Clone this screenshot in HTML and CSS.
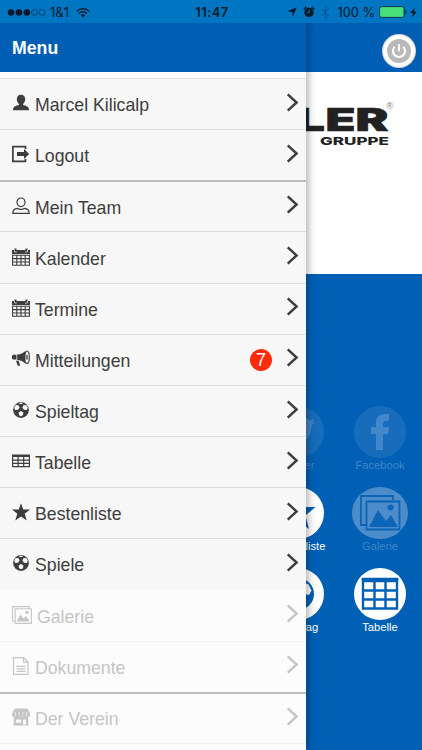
FILE: index.html
```html
<!DOCTYPE html>
<html lang="de">
<head>
<meta charset="utf-8">
<title>Menu</title>
<link rel="stylesheet" href="styles.css">
</head>
<body>
<svg class="defs" aria-hidden="true">
  <symbol id="arrow" viewBox="0 0 12 18"><path d="M1.500 1.200 9.900 9 1.500 16.800" fill="none" stroke="currentColor" stroke-width="2.300"/></symbol>
  <symbol id="user" viewBox="0 0 18 18"><path d="M9 .8c2.700 0 4.200 1.900 4.200 4.500 0 2.100-1 3.600-2.100 4.700v1c3 .7 6 1.300 6 5.300H.9c0-4 3-4.600 6-5.300v-1C5.800 8.900 4.800 7.400 4.800 5.300 4.800 2.700 6.300.8 9 .8z" fill="currentColor"/></symbol>
  <symbol id="logout" viewBox="0 0 18 18"><path d="M13.500 4V1.700H.9v14.600h12.600V14" fill="none" stroke="currentColor" stroke-width="1.700"/><path d="M5 7h7V4l5.200 5-5.200 5v-3H5z" fill="currentColor"/></symbol>
  <symbol id="person" viewBox="0 0 18 18"><g fill="none" stroke="currentColor" stroke-width="1.200"><ellipse cx="9" cy="5.300" rx="4" ry="4.300"/><path d="M5.500 11.400C2.500 11.600.8 13 .8 16.400h16.400c0-3.400-1.700-4.800-4.700-5-1.800 1.200-5.200 1.200-7 0z"/></g></symbol>
  <symbol id="calendar" viewBox="0 0 18 18"><path d="M0 2h2.500V.4h2V2h9V.4h2V2H18v4H0z" fill="currentColor"/><path d="M2.500 2v2h2.300M13 4h2.500V2" fill="none" stroke="#f7f7f7" stroke-width=".7"/><path d="M.6 6.500v10.800h16.800V6.500M.6 7.200h16.800M.6 10.600h16.800M.6 14h16.800M4.800 7v10.300M9 7v10.300M13.200 7v10.300" fill="none" stroke="currentColor" stroke-width="1.100"/></symbol>
  <symbol id="horn" viewBox="0 0 18 18"><path d="M0 5.800 1 4.800h3.500v4.800H1L0 8.700zM5.200 4.600C8.500 4.500 11 3 13.200 1v12.500c-2.200-2-4.700-3.200-8-3.400zM4 10.700h2.700l1.500 5H5.700z" fill="currentColor"/><ellipse cx="15" cy="7.200" rx="2.300" ry="6.200" fill="none" stroke="currentColor" stroke-width="1.200"/><path d="M15 5v4.500" stroke="currentColor" stroke-width="1.300"/></symbol>
  <symbol id="ball" viewBox="0 0 18 18"><circle cx="9" cy="9" r="7.900" fill="currentColor"/><g fill="#f7f7f7"><path d="M2.200 6.600 3.800 4l2.800.2 1 2.300-1.500 2.300-3 .1zM15.800 6.600 14.200 4l-2.800.2-1 2.300 1.500 2.300 3 .1zM6.600 11.500 9 10l2.400 1.500-.4 2.700-2 1-2-1zM6.600 2.300 9 1.600l2.400.7L9 3.200z"/></g></symbol>
  <symbol id="table" viewBox="0 0 18 18"><path d="M.6 3.300h16.800v11.400H.6zM.6 8.100h16.800M.6 11.300h16.800M6.100 4v10.500M11.700 4v10.500" fill="none" stroke="currentColor" stroke-width="1.200"/><path d="M0 2.700h18V5H0z" fill="currentColor"/></symbol>
  <symbol id="star" viewBox="0 0 18 18"><path d="m9 .2 2.300 6.300H18l-5.300 4.200 2 6.800L9 13.500l-5.700 4 2-6.800L0 6.500h6.700z" fill="currentColor"/></symbol>
  <symbol id="gallery" viewBox="0 0 20 18"><path d="M2.700 15.300H.6V.6h16.600v1.600M3.200 2.700h16.200v14.700H3.200z" fill="none" stroke="currentColor" stroke-width="1.100"/><path d="m4.500 15.500 4-7 3.200 4 2.300-2.500 4 5.500z" fill="currentColor"/><circle cx="15" cy="6.400" r="1.700" fill="currentColor"/></symbol>
  <symbol id="document" viewBox="0 0 18 18"><path d="M1.500.6h10l4.500 4.500v12.300H1.500zM11.500.6v4.500H16M4.500 9.300h8.800M4.500 11.800h8.800M4.500 14.300h8.800" fill="none" stroke="currentColor" stroke-width="1.150"/></symbol>
  <symbol id="shop" viewBox="0 0 18 18"><path d="M2.500.5h13L18 6v1.200a1.800 1.800 0 0 1-3.600 0 1.800 1.800 0 0 1-3.600 0 1.800 1.800 0 0 1-3.600 0 1.800 1.800 0 0 1-3.600 0A1.800 1.800 0 0 1 0 7.200V6zM1.800 8.500h14.400v8h.8v1H1v-1h.8z" fill="currentColor"/><path d="M4 11.500h5v3.200H4zM11 11.500h3v5h-3z" fill="#fcfcfc"/><path d="M3.600 7V4M7.200 7V4M10.800 7V4M14.400 7V4" stroke="#fcfcfc" stroke-width=".7"/></symbol>
</svg>

<div class="phone">
  <header class="statusbar">
    <div class="carrier">
      <svg class="signal" viewBox="0 0 39 9"><g fill="#041a2b"><circle cx="4" cy="4.500" r="3.300"/><circle cx="11.900" cy="4.500" r="3.300"/><circle cx="19.800" cy="4.500" r="3.300"/></g><g fill="none" stroke="#07365b" stroke-width=".8"><circle cx="27.500" cy="4.500" r="2.900"/><circle cx="35.100" cy="4.500" r="2.900"/></g></svg>
      <span>1&amp;1</span>
      <svg class="wifi" viewBox="0 0 14 11"><path d="M.8 4.200a8.800 8.800 0 0 1 12.400 0M3 6.500a5.700 5.700 0 0 1 8 0" fill="none" stroke="#041a2b" stroke-width="1.500"/><path d="m7 10.500-2.200-2.300a3.200 3.200 0 0 1 4.400 0z" fill="#041a2b"/></svg>
    </div>
    <div class="clock">11:47</div>
    <div class="indicators">
      <svg class="location" viewBox="0 0 10 10"><path d="M9.700.3 5.800 9.700 5.200 5 .4 4.300z" fill="#041a2b"/></svg>
      <svg class="alarm" viewBox="0 0 12 12"><circle cx="6" cy="6.400" r="4.700" fill="#041a2b"/><path d="M.8 3.300 3.300.9M11.200 3.300 8.700.9" stroke="#041a2b" stroke-width="1.500"/><path d="M6.200 3.500v3.200H4" fill="none" stroke="#0873bd"/></svg>
      <svg class="bluetooth" viewBox="0 0 9 15"><path d="m.8 4 7 7-3.400 3.300V.8l3.400 3.300-7 7" fill="none" stroke="#075795" stroke-width="1"/></svg>
      <span>100 %</span>
      <svg class="battery" viewBox="0 0 28 12"><rect x=".6" y=".6" width="24.400" height="10.800" rx="2" fill="#47df78" stroke="#08365a" stroke-width="1"/><path d="M26 4c2 .5 2 3.500 0 4z" fill="#08365a"/></svg>
      <svg class="bolt" viewBox="0 0 7 11"><path d="M4.700.5.4 6h2.500l-.8 4.500L6.700 4.700H4z" fill="#041a2b"/></svg>
    </div>
  </header>

  <main class="home">
    <div class="topbar">
      <button class="power" aria-label="Abmelden"><svg viewBox="0 0 34 34"><circle cx="17" cy="17" r="12" fill="#b9b9b9"/><path d="M12.700 12.800a6 6 0 1 0 8.600 0M17 10v7.300" fill="none" stroke="#fff" stroke-width="2.200"/></svg></button>
    </div>
    <div class="sponsor">
      <svg class="logo" viewBox="0 0 100 46" width="100" height="46">
        <g class="logo-name"><text x="-4" y="30.500" textLength="29" lengthAdjust="spacingAndGlyphs">L</text><text x="25.500" y="30.500" textLength="30" lengthAdjust="spacingAndGlyphs">E</text><text x="55.500" y="30.500" textLength="33" lengthAdjust="spacingAndGlyphs">R</text></g>
        <text class="logo-group" x="20" y="45" textLength="69" lengthAdjust="spacingAndGlyphs">GRUPPE</text>
        <text class="logo-mark" x="86.500" y="8.500">®</text>
      </svg>
    </div>
    <div class="tiles">
      <div class="tile dim"><svg class="disc" viewBox="0 0 52 52"><circle class="back" cx="26" cy="26" r="26"/><path class="front" d="M43 15.500c-1.300.6-2.600 1-4 1.100 1.400-.9 2.500-2.200 3-3.800-1.300.8-2.800 1.400-4.400 1.700a7 7 0 0 0-12 6.400c-5.800-.3-11-3.100-14.400-7.300-1.900 3.200-1 7.300 2.100 9.300-1.100 0-2.200-.3-3.100-.9 0 3.400 2.300 6.200 5.600 6.900-1 .3-2.100.3-3.200.1.900 2.800 3.500 4.800 6.500 4.900A14 14 0 0 1 9 36.800c11.500 7 30.500 1.500 30.500-17.600 1.400-1 2.600-2.200 3.500-3.700z"/></svg><span>Twitter</span></div>
      <div class="tile dim"><svg class="disc" viewBox="0 0 52 52"><circle class="back" cx="26" cy="26" r="26"/><path class="front" d="M22 44V28h-5v-7h5v-4c0-6 3.500-9 8.500-9H35v7h-3c-2.300 0-3 1-3 3v3h6l-1 7h-5v16z"/></svg><span>Facebook</span></div>
      <div class="tile"><svg class="disc" viewBox="0 0 52 52"><circle cx="26" cy="26" r="26" fill="#fff"/><path d="m26 6 4.500 14H43.500L33.500 28.500 37 42 26 33.500 15 42l3.500-13.500L8.500 20H21.500z" fill="#0060b6"/></svg><span>Bestenliste</span></div>
      <div class="tile faded"><svg class="disc wide" viewBox="0 0 56 52"><ellipse cx="28" cy="26" rx="28" ry="26"/><path d="M14 38H9V9h32v4M14.500 14.500h33v28h-33z"/><path class="solid" d="m17 40 9-17 8 11 5-6 7 12z"/><circle class="solid" cx="38.500" cy="20.500" r="3"/></svg><span>Galerie</span></div>
      <div class="tile"><svg class="disc" viewBox="0 0 52 52"><circle cx="26" cy="26" r="26" fill="#fff"/><circle cx="26" cy="26" r="16" fill="#0060b6"/><path d="M26 16.500 31 14l5.500 2.500 3 6-2.500 4.500-6.500-1.500zM26 16.500 21 14l-5.500 2.500-3 6L15 27l6.500-1.500zM20 32l6-4 6 4-1 6-5 2.500-5-2.500z" fill="#fff"/></svg><span>Spieltag</span></div>
      <div class="tile"><svg class="disc" viewBox="0 0 52 52"><circle cx="26" cy="26" r="26" fill="#fff"/><path d="M9 11h34v29.500H9zM9 22.500h34M9 31.500h34M20.500 13v27M31.500 13v27" fill="none" stroke="#0060b6" stroke-width="2.400"/><path d="M7.800 10h36.400v4.200H7.800z" fill="#0060b6"/></svg><span>Tabelle</span></div>
    </div>
  </main>

  <nav class="menu">
    <h1>Menu</h1>
    <ul>
      <li><svg class="icon"><use href="#user"/></svg><span>Marcel Kilicalp</span><svg class="arrow"><use href="#arrow"/></svg></li>
      <li><svg class="icon"><use href="#logout"/></svg><span>Logout</span><svg class="arrow"><use href="#arrow"/></svg></li>
      <li class="group"><svg class="icon"><use href="#person"/></svg><span>Mein Team</span><svg class="arrow"><use href="#arrow"/></svg></li>
      <li><svg class="icon"><use href="#calendar"/></svg><span>Kalender</span><svg class="arrow"><use href="#arrow"/></svg></li>
      <li><svg class="icon"><use href="#calendar"/></svg><span>Termine</span><svg class="arrow"><use href="#arrow"/></svg></li>
      <li><svg class="icon"><use href="#horn"/></svg><span>Mitteilungen</span><b class="badge">7</b><svg class="arrow"><use href="#arrow"/></svg></li>
      <li><svg class="icon"><use href="#ball"/></svg><span>Spieltag</span><svg class="arrow"><use href="#arrow"/></svg></li>
      <li><svg class="icon"><use href="#table"/></svg><span>Tabelle</span><svg class="arrow"><use href="#arrow"/></svg></li>
      <li><svg class="icon"><use href="#star"/></svg><span>Bestenliste</span><svg class="arrow"><use href="#arrow"/></svg></li>
      <li><svg class="icon"><use href="#ball"/></svg><span>Spiele</span><svg class="arrow"><use href="#arrow"/></svg></li>
      <li class="off first"><svg class="icon large"><use href="#gallery"/></svg><span>Galerie</span><svg class="arrow"><use href="#arrow"/></svg></li>
      <li class="off"><svg class="icon"><use href="#document"/></svg><span>Dokumente</span><svg class="arrow"><use href="#arrow"/></svg></li>
      <li class="off group"><svg class="icon"><use href="#shop"/></svg><span>Der Verein</span><svg class="arrow"><use href="#arrow"/></svg></li>
      <li class="off"></li>
    </ul>
  </nav>
</div>
</body>
</html>
```
FILE: styles.css
```css
* { box-sizing: border-box; }
body { margin: 0; font-family: "Liberation Sans", Arial, sans-serif; }
.defs { position: absolute; width: 0; height: 0; }
.phone { position: relative; width: 422px; height: 750px; overflow: hidden; background: #0060b6; }

.statusbar {
  display: grid; grid-template-columns: 1fr auto 1fr; align-items: center;
  height: 23px; padding: 1px 5px 0 7px; background: #0075c2;
  color: #041a2b; font: 12px "Inter", sans-serif;
}
.carrier, .indicators { display: flex; align-items: center; }
.signal { width: 39px; height: 9px; margin-right: 4px; }
.carrier span { font-size: 13px; }
.wifi { width: 14px; height: 11px; margin-left: 7px; }
.clock { font-size: 13px; font-weight: 600; letter-spacing: .4px; }
.indicators { justify-content: flex-end; }
.indicators span { font-size: 12.800px; white-space: nowrap; }
.location { width: 10px; height: 10px; margin-right: 6px; }
.alarm { width: 12px; height: 12px; margin-right: 6px; }
.bluetooth { width: 9px; height: 15px; margin-right: 7px; }
.battery { width: 28px; height: 12px; margin: 0 3px 0 4px; }
.bolt { width: 7px; height: 11px; }

.topbar { display: flex; justify-content: flex-end; height: 49px; padding: 11px 6px 0 0; background: #005fb5; }
.power { width: 34px; height: 34px; padding: 0; border: 0; border-radius: 50%; background: #fff; box-shadow: inset 0 0 2px #777; }
.power svg { display: block; }
.sponsor { display: flex; justify-content: flex-end; height: 202px; padding: 28px 22px 0 0; background: #fff; }
.logo { overflow: visible; }
.logo text { fill: #222; font-family: "Inter", sans-serif; font-weight: 900; }
.logo-name text { font-size: 31px; stroke: #222; stroke-width: .6px; }
.logo .logo-group { font-size: 11px; font-weight: 800; }
.logo .logo-mark { font-family: "Liberation Sans", sans-serif; font-size: 9px; font-weight: 400; fill: #777; }

.tiles { display: grid; grid-template-columns: 82px 82px; grid-auto-rows: 81px; justify-content: end; padding: 132px 1px 0 0; }
.tile { display: flex; flex-direction: column; align-items: center; color: #fff; font-size: 11.200px; line-height: 13px; }
.tile span { margin-top: 1px; white-space: nowrap; }
.disc { display: block; width: 52px; height: 52px; flex: none; }
.disc.wide { width: 56px; }
.dim { color: #3f86c7; }
.dim .back { fill: #176dbb; }
.dim .front { fill: #4187c9; }
.faded { color: #3d86c8; }
.faded ellipse { fill: #4d8cca; }
.faded path { fill: none; stroke: #0c65b6; stroke-width: 1.800; }
.faded .solid { fill: #0c65b6; stroke: none; }

.menu { position: absolute; left: 0; top: 23px; width: 306px; height: 727px; background: #fff; box-shadow: 2px 0 8px rgba(0, 0, 0, .34); clip-path: inset(0 -12px 0 0); }
.menu h1 { height: 49px; margin: 0; padding: 0 12px; background: #005fb5; color: #fff; font-size: 17.700px; line-height: 51px; }
.menu ul { height: 678px; margin: 0; padding: 6px 0 0; list-style: none; overflow: hidden; }
.menu li { display: flex; align-items: center; height: 51.160px; padding: 0 7px 0 12px; border-top: 1px solid #dedede; background: #f7f7f7; color: #3d3d3d; font-size: 17.700px; }
.menu li span { flex: 1; padding-top: 2px; line-height: 20px; }
.icon { width: 18px; height: 18px; margin: 0 5px 2px 0; flex: none; }
.icon.large { width: 20px; }
.arrow { width: 13px; height: 19px; margin-bottom: 4px; flex: none; }
.menu li.group { border-top: 2px solid #bcbcbc; }
.menu li.off { background: #fcfcfc; border-top-color: #f1f1f1; color: #c5c5c5; }
.menu li.off.first { border-top-color: #fcfcfc; }
.menu li.off.group { border-top-color: #bebebe; }
.badge { width: 22px; height: 22px; margin-right: 14px; border-radius: 50%; background: #ff2b0a; color: #fff; font-size: 18px; font-weight: 400; line-height: 23px; text-align: center; }
```
